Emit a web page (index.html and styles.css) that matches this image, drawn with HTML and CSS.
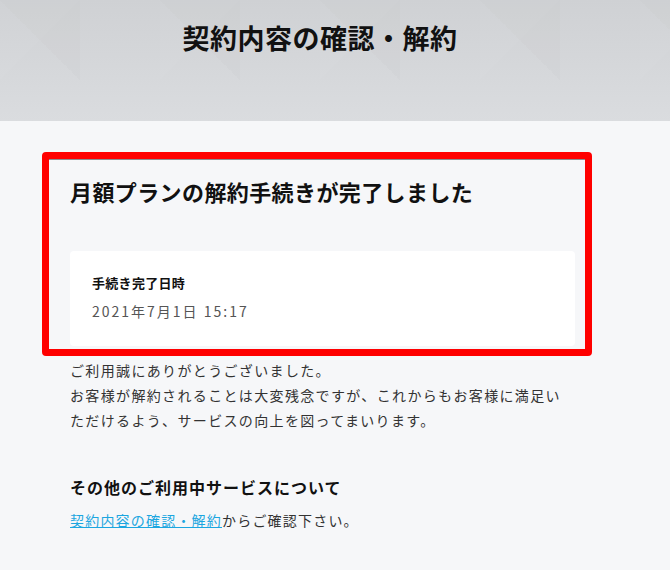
FILE: index.html
```html
<!DOCTYPE html>
<html lang="ja">
<head>
<meta charset="utf-8">
<title>契約内容の確認・解約</title>
<link rel="stylesheet" href="styles.css">
</head>
<body>
<header class="hero">
  <div class="hero-inner">
    <h1 class="hero-title">契約内容の確認・解約</h1>
  </div>
</header>
<main class="main">
  <section class="card">
    <h2 class="card-title">月額プランの解約手続きが完了しました</h2>
    <div class="info">
      <div class="info-label">手続き完了日時</div>
      <div class="info-value">2021年7月1日 15:17</div>
    </div>
  </section>
  <p class="thanks">ご利用誠にありがとうございました。<br>お客様が解約されることは大変残念ですが、これからもお客様に満足いただけるよう、サービスの向上を図ってまいります。</p>
  <h3 class="sub-title">その他のご利用中サービスについて</h3>
  <p class="sub-text"><a class="link" href="#">契約内容の確認・解約</a>からご確認下さい。</p>
</main>
</body>
</html>
```

FILE: styles.css
```css
html, body {
  margin: 0;
  padding: 0;
}
body {
  background: #f6f7f9;
  font-family: "Noto Sans CJK JP", "Noto Sans", sans-serif;
  color: #333;
}
.hero {
  height: 121px;
  background:
    linear-gradient(135deg, rgba(255,255,255,0.025) 25%, transparent 25%) 0 0 / 160px 160px,
    linear-gradient(225deg, rgba(0,0,0,0.012) 25%, transparent 25%) 80px 0 / 160px 160px,
    linear-gradient(to bottom, #cfd1d4 0%, #dadcdf 100%);
}
.hero-inner {
  width: 640px;
}
.hero-title {
  margin: 0;
  padding-top: 18px;
  text-align: center;
  font-size: 27px;
  line-height: 40px;
  font-weight: 700;
  letter-spacing: 0.5px;
  color: #111;
}
.main {
  width: 550px;
  margin-left: 42px;
  padding-top: 31px;
}
.card {
  border: 7px solid #ff0000;
  border-radius: 4px;
  padding: 17px 10px 3px 21px;
  box-shadow: inset 0 1px 0 #8a8c90;
}
.card-title {
  margin: 0 0 44px;
  font-size: 22px;
  line-height: 31px;
  font-weight: 700;
  letter-spacing: 0.4px;
  color: #111;
}
.info {
  background: #fff;
  border-radius: 4px;
  height: 95px;
  box-sizing: border-box;
  padding: 22px 22px 0;
}
.info-label {
  font-size: 13px;
  line-height: 20px;
  font-weight: 700;
  letter-spacing: 0.3px;
  color: #111;
}
.info-value {
  margin-top: 8px;
  font-size: 14px;
  line-height: 20px;
  letter-spacing: 2px;
  color: #555;
}
.thanks {
  margin: 2px 0 0;
  padding: 0 28px;
  font-size: 14px;
  line-height: 25px;
  letter-spacing: 1.35px;
  color: #333;
}
.sub-title {
  margin: 42px 0 0;
  padding: 0 28px;
  font-size: 16px;
  line-height: 25px;
  font-weight: 700;
  letter-spacing: 1px;
  color: #111;
}
.sub-text {
  margin: 8px 0 0;
  padding: 0 28px;
  font-size: 14px;
  line-height: 25px;
  letter-spacing: 1.2px;
  color: #333;
}
.link {
  color: #1ba6e0;
  text-decoration: underline;
}
```
